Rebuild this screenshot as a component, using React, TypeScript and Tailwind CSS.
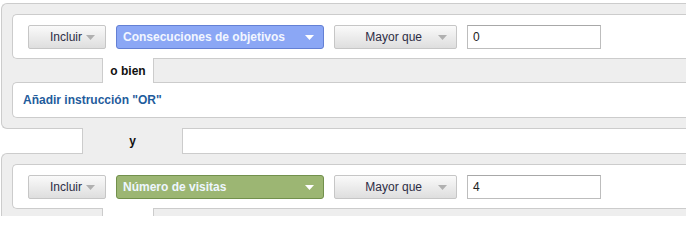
import React from "react";

const Arrow = ({ color }: { color: string }) => (
  <svg width="9" height="5" viewBox="0 0 9 5" className="shrink-0">
    <path d="M0 0 H9 L4.5 5 Z" fill={color} />
  </svg>
);

const GrayButton = ({ label, w, gap, pr }: { label: string; w: string; gap: string; pr: string }) => (
  <div
    className={`flex h-[24px] items-center justify-end rounded-[2px] border border-[#c6c6c6] bg-gradient-to-b from-[#fafafa] to-[#dedede] text-[12px] text-[#2d2d45] ${w} ${gap} ${pr}`}
  >
    <span>{label}</span>
    <Arrow color="#b0b0b0" />
  </div>
);

const Row = ({ metric, color, value }: { metric: string; color: "blue" | "green"; value: string }) => (
  <div className="flex gap-[10px]">
    <GrayButton label="Incluir" w="w-[78px]" gap="gap-[4px]" pr="pr-[10px]" />
    {color === "blue" ? (
      <div className="flex h-[24px] w-[208px] items-center justify-between rounded-[3px] border border-[#6480d4] bg-[#8ba7f5] pl-[6px] pr-[9px] text-[12px] font-bold text-[#f2f6ff]">
        <span>{metric}</span>
        <Arrow color="#ffffff" />
      </div>
    ) : (
      <div className="flex h-[24px] w-[208px] items-center justify-between rounded-[3px] border border-[#72904c] bg-[#9cb673] pl-[6px] pr-[9px] text-[12px] font-bold text-[#eef6ff]">
        <span>{metric}</span>
        <Arrow color="#ffffff" />
      </div>
    )}
    <GrayButton label="Mayor que" w="w-[123px]" gap="gap-[16px]" pr="pr-[9px]" />
    <div className="flex h-[24px] w-[134px] items-center border border-[#bdbdbd] border-t-[#a8a8a8] bg-white pl-[5px] text-[12px] text-[#222]">
      {value}
    </div>
  </div>
);

const Block = ({ metric, color, value }: { metric: string; color: "blue" | "green"; value: string }) => (
  <div className="rounded-l-[6px] border border-r-0 border-[#cccccc] bg-[#eeeeee] py-[10px] pl-[10px]">
    <div className="rounded-l-[5px] border border-r-0 border-[#cccccc] bg-white pb-[9px] pl-[15px] pt-[10px]">
      <Row metric={metric} color={color} value={value} />
    </div>
    <div className="flex h-[23px]">
      <div className="w-[90px]" />
      <div className="relative z-10 -my-px flex h-[25px] w-[52px] items-center justify-center border-x border-[#cccccc] bg-white text-[12px] font-bold text-[#111]">
        o bien
      </div>
    </div>
    <div className="flex h-[36px] items-center rounded-l-[5px] border border-r-0 border-[#cccccc] bg-white pl-[10px] text-[12px] font-bold text-[#1f5c9c]">
      Añadir instrucción "OR"
    </div>
  </div>
);

export default function App() {
  return (
    <div
      className="h-[216px] w-[686px] overflow-hidden bg-white"
      style={{ fontFamily: '"Liberation Sans", Arial, sans-serif' }}
    >
      <div className="w-[760px] pl-px pt-[3px]">
        <Block metric="Consecuciones de objetivos" color="blue" value="0" />
        <div className="flex h-[24px]">
          <div className="w-[81px]" />
          <div className="relative z-10 -my-px flex h-[26px] w-[101px] items-center justify-center border-x border-[#cccccc] bg-[#eeeeee] text-[12px] font-bold text-[#111]">
            y
          </div>
        </div>
        <Block metric="Número de visitas" color="green" value="4" />
      </div>
    </div>
  );
}
